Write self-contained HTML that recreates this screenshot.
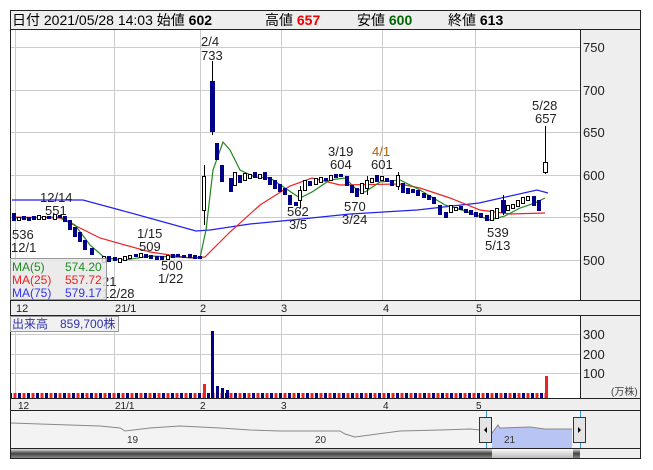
<!DOCTYPE html>
<html><head><meta charset="utf-8"><style>
body{margin:0;background:#fff;width:653px;height:470px;overflow:hidden}
svg{display:block;font-family:"Liberation Sans","Noto Sans CJK JP",sans-serif}
</style></head><body>
<svg width="653" height="470" viewBox="0 0 653 470" font-size="12" xmlns="http://www.w3.org/2000/svg">
<rect x="10.5" y="10.5" width="630" height="448" fill="#fff" stroke="#222"/>
<rect x="11" y="11" width="629" height="18" fill="#eeeeee"/>
<line x1="10" y1="29.5" x2="641" y2="29.5" stroke="#222"/>
<text x="12" y="25" font-size="14">日付 2021/05/28 14:03 始値 <tspan font-weight="bold">602</tspan></text>
<text x="265" y="25" font-size="14">高値 <tspan font-weight="bold" fill="#ee0000">657</tspan></text>
<text x="357" y="25" font-size="14">安値 <tspan font-weight="bold" fill="#006600">600</tspan></text>
<text x="448" y="25" font-size="14">終値 <tspan font-weight="bold">613</tspan></text>
<rect x="580" y="30" width="60" height="270" fill="#eeeeee"/>
<line x1="580.5" y1="30" x2="580.5" y2="300" stroke="#222"/>
<g font-size="13" fill="#222">
<text x="583" y="52">750</text><text x="583" y="95">700</text><text x="583" y="137">650</text>
<text x="583" y="180">600</text><text x="583" y="222">550</text><text x="583" y="265">500</text>
</g>
<g stroke="#cccccc" stroke-width="1">
<line x1="11" y1="47.5" x2="580" y2="47.5"/><line x1="11" y1="90.5" x2="580" y2="90.5"/>
<line x1="11" y1="132.5" x2="580" y2="132.5"/><line x1="11" y1="175.5" x2="580" y2="175.5"/>
<line x1="11" y1="217.5" x2="580" y2="217.5"/><line x1="11" y1="260.5" x2="580" y2="260.5"/>
<line x1="15.5" y1="30" x2="15.5" y2="300"/><line x1="114.5" y1="30" x2="114.5" y2="300"/>
<line x1="200.5" y1="30" x2="200.5" y2="300"/><line x1="281.5" y1="30" x2="281.5" y2="300"/>
<line x1="382.5" y1="30" x2="382.5" y2="300"/><line x1="475.5" y1="30" x2="475.5" y2="300"/>
</g>
<polyline fill="none" stroke="#2222ee" stroke-width="1.2" points="12,200 83,200 120,210 160,221 196,231 210,230 250,224 292,220 350,214 417,210 479,203 537,190 548,193"/>
<polyline fill="none" stroke="#ee2222" stroke-width="1.2" points="12,217 60,218 100,238 150,252 190,258 205,257 230,232 260,205 290,186 312,178 340,185 400,184 420,188 450,198 480,210 510,214 545,213"/>
<polyline fill="none" stroke="#228822" stroke-width="1.2" points="12,218 60,217 75,225 90,245 105,258 125,260 150,256 175,257 200,258 206,230 213,170 223,142 230,150 240,170 255,177 270,178 285,188 300,198 312,192 330,180 345,178 355,188 365,192 380,182 400,180 420,190 445,205 465,211 490,220 505,216 520,208 535,203 545,198"/>
<g stroke="#000" stroke-width="1">
<path d="M204.5,165V225M212.5,61V135M545.5,126V174M300.5,186V208M503.5,195V215M367.5,176V195M398.5,172V190"/>
</g>
<g fill="#000088">
<rect x="12" y="213" width="4" height="8"/><rect x="22" y="216" width="4" height="4"/><rect x="27" y="217" width="4" height="4"/><rect x="32" y="216" width="4" height="4"/><rect x="47" y="216" width="4" height="3"/><rect x="58" y="215" width="4" height="3"/><rect x="63" y="216" width="4" height="6"/><rect x="68" y="220" width="4" height="10"/><rect x="73" y="227" width="4" height="10"/><rect x="78" y="232" width="4" height="10"/><rect x="83" y="240" width="4" height="10"/><rect x="90" y="248" width="4" height="7"/><rect x="107" y="256" width="4" height="6"/><rect x="113" y="257" width="4" height="4"/><rect x="134" y="254" width="4" height="3"/><rect x="144" y="254" width="4" height="4"/><rect x="149" y="255" width="4" height="4"/><rect x="155" y="256" width="4" height="4"/><rect x="160" y="256" width="4" height="4"/><rect x="171" y="254" width="4" height="4"/><rect x="176" y="254" width="4" height="3"/><rect x="182" y="255" width="4" height="3"/><rect x="188" y="254" width="4" height="4"/><rect x="193" y="255" width="4" height="4"/><rect x="198" y="256" width="4" height="3"/>
<rect x="210" y="81" width="5" height="51"/><rect x="215" y="143" width="4" height="17"/><rect x="220" y="165" width="4" height="17"/><rect x="229" y="178" width="4" height="14"/><rect x="238" y="175" width="4" height="8"/><rect x="253" y="172" width="4" height="6"/><rect x="263" y="172" width="4" height="8"/><rect x="268" y="177" width="4" height="8"/><rect x="273" y="180" width="4" height="9"/><rect x="278" y="184" width="4" height="8"/><rect x="283" y="188" width="4" height="7"/><rect x="288" y="195" width="4" height="10"/><rect x="294" y="202" width="4" height="4"/><rect x="308" y="181" width="4" height="5"/><rect x="324" y="178" width="4" height="3"/><rect x="334" y="174" width="4" height="4"/><rect x="339" y="174" width="4" height="3"/><rect x="345" y="176" width="4" height="10"/><rect x="350" y="185" width="4" height="8"/><rect x="355" y="188" width="4" height="9"/><rect x="375" y="175" width="4" height="7"/><rect x="385" y="178" width="4" height="4"/><rect x="390" y="180" width="4" height="6"/><rect x="401" y="183" width="4" height="10"/><rect x="406" y="188" width="4" height="6"/><rect x="411" y="189" width="4" height="4"/><rect x="416" y="190" width="4" height="6"/><rect x="422" y="193" width="4" height="5"/><rect x="427" y="195" width="4" height="5"/><rect x="432" y="197" width="4" height="7"/><rect x="438" y="205" width="4" height="10"/><rect x="444" y="212" width="4" height="6"/><rect x="459" y="206" width="4" height="4"/><rect x="464" y="209" width="4" height="4"/><rect x="469" y="210" width="4" height="5"/><rect x="474" y="212" width="4" height="5"/><rect x="479" y="213" width="4" height="5"/><rect x="485" y="215" width="4" height="6"/><rect x="501" y="200" width="5" height="13"/><rect x="532" y="196" width="4" height="10"/><rect x="537" y="200" width="4" height="11"/>
</g>
<g fill="#fff" stroke="#000" stroke-width="1">
<rect x="17.5" y="217.5" width="3" height="3"/><rect x="37.5" y="215.5" width="3" height="4"/><rect x="42.5" y="216.5" width="3" height="3"/><rect x="53.5" y="214.5" width="3" height="5"/><rect x="102.5" y="256.5" width="3" height="6"/><rect x="118.5" y="258.5" width="3" height="4"/><rect x="123.5" y="256.5" width="3" height="4"/><rect x="128.5" y="255.5" width="3" height="3"/><rect x="139.5" y="253.5" width="3" height="4"/><rect x="166.5" y="255.5" width="3" height="4"/>
<rect x="202.5" y="176.5" width="3" height="34"/><rect x="233.5" y="172.5" width="3" height="13"/><rect x="243.5" y="173.5" width="3" height="7"/><rect x="248.5" y="174.5" width="3" height="4"/><rect x="258.5" y="174.5" width="3" height="4"/><rect x="298.5" y="190.5" width="3" height="10"/><rect x="303.5" y="180.5" width="3" height="10"/><rect x="314.5" y="178.5" width="3" height="6"/><rect x="319.5" y="177.5" width="3" height="5"/><rect x="329.5" y="175.5" width="3" height="5"/><rect x="360.5" y="183.5" width="3" height="10"/><rect x="365.5" y="180.5" width="3" height="8"/><rect x="370.5" y="178.5" width="3" height="4"/><rect x="380.5" y="176.5" width="3" height="4"/><rect x="396.5" y="175.5" width="3" height="11"/><rect x="449.5" y="205.5" width="3" height="7"/><rect x="454.5" y="207.5" width="3" height="3"/><rect x="490.5" y="210.5" width="3" height="10"/><rect x="495.5" y="208.5" width="3" height="10"/><rect x="506.5" y="205.5" width="3" height="5"/><rect x="511.5" y="204.5" width="3" height="4"/><rect x="516.5" y="200.5" width="3" height="6"/><rect x="521.5" y="197.5" width="3" height="6"/><rect x="526.5" y="196.5" width="3" height="4"/><rect x="543.5" y="162.5" width="4" height="10"/>
</g>
<g fill="#222" font-size="13">
<text x="201" y="46">2/4</text><text x="201" y="60">733</text>
<text x="532" y="110">5/28</text><text x="535" y="123">657</text>
<text x="328" y="156">3/19</text><text x="330" y="169">604</text>
<text x="372" y="156" fill="#b06000">4/1</text><text x="371" y="169">601</text>
<text x="40" y="202">12/14</text><text x="45" y="215">551</text>
<text x="12" y="239">536</text><text x="11" y="252">12/1</text>
<text x="137" y="238">1/15</text><text x="139" y="251">509</text>
<text x="161" y="270">500</text><text x="158" y="283">1/22</text>
<text x="287" y="216">562</text><text x="289" y="229">3/5</text>
<text x="344" y="211">570</text><text x="342" y="224">3/24</text>
<text x="487" y="237">539</text><text x="485" y="250">5/13</text>
<text x="102" y="286">21</text><text x="102" y="298">12/28</text>
</g>
<rect x="10.5" y="258.5" width="96" height="41" fill="#e8e8e8" fill-opacity="0.85" stroke="#999"/>
<g font-size="12">
<text x="12" y="271" fill="#228822">MA(5)</text><text x="65" y="271" fill="#228822">574.20</text>
<text x="12" y="284" fill="#ee2222">MA(25)</text><text x="65" y="284" fill="#ee2222">557.72</text>
<text x="12" y="297" fill="#3333ee">MA(75)</text><text x="65" y="297" fill="#3333ee">579.17</text>
</g>
<rect x="11" y="300" width="629" height="15" fill="#eeeeee"/>
<line x1="10" y1="300.5" x2="641" y2="300.5" stroke="#222"/>
<line x1="10" y1="315.5" x2="641" y2="315.5" stroke="#222"/>
<g font-size="11" fill="#222"><text x="16" y="312">12</text><text x="115" y="312">21/1</text><text x="200" y="312">2</text><text x="281" y="312">3</text><text x="383" y="312">4</text><text x="476" y="312">5</text></g>
<rect x="580" y="316" width="60" height="83" fill="#eeeeee"/>
<line x1="580.5" y1="316" x2="580.5" y2="399" stroke="#222"/>
<g stroke="#cccccc"><line x1="11" y1="334.5" x2="580" y2="334.5"/><line x1="11" y1="354.5" x2="580" y2="354.5"/><line x1="11" y1="373.5" x2="580" y2="373.5"/>
<line x1="15.5" y1="316" x2="15.5" y2="398"/><line x1="114.5" y1="316" x2="114.5" y2="398"/><line x1="200.5" y1="316" x2="200.5" y2="398"/><line x1="281.5" y1="316" x2="281.5" y2="398"/><line x1="382.5" y1="316" x2="382.5" y2="398"/><line x1="475.5" y1="316" x2="475.5" y2="398"/></g>
<g font-size="13" fill="#222"><text x="583" y="339">300</text><text x="583" y="359">200</text><text x="583" y="378">100</text></g>
<text x="611" y="395" font-size="10" fill="#444">(万株)</text>
<defs><pattern id="vp" width="9" height="5" patternUnits="userSpaceOnUse"><rect width="3" height="5" fill="#000088"/><rect x="4.5" width="3" height="5" fill="#ee2222"/></pattern></defs>
<rect x="11" y="393" width="534" height="5" fill="url(#vp)"/>
<rect x="203" y="384" width="3" height="14" fill="#ee2222"/><rect x="211" y="331" width="3" height="67" fill="#000088"/><rect x="216" y="386" width="3" height="12" fill="#000088"/><rect x="221" y="388" width="3" height="10" fill="#000088"/><rect x="226" y="390" width="3" height="8" fill="#000088"/><rect x="545" y="376" width="3" height="22" fill="#ee2222"/>
<rect x="10.5" y="316.5" width="108" height="15" fill="#eeeeee" fill-opacity="0.85" stroke="#999"/>
<text x="12" y="328" fill="#3333aa">出来高　859,700株</text>
<rect x="11" y="399" width="629" height="11" fill="#eeeeee"/>
<line x1="10" y1="398.5" x2="641" y2="398.5" stroke="#222"/><line x1="10" y1="410.5" x2="641" y2="410.5" stroke="#222"/>
<g font-size="10" fill="#222"><text x="18" y="409">12</text><text x="115" y="409">21/1</text><text x="200" y="409">2</text><text x="281" y="409">3</text><text x="383" y="409">4</text><text x="476" y="409">5</text></g>
<rect x="11" y="411" width="569" height="37" fill="#f3f3f3"/>
<rect x="580" y="411" width="60" height="37" fill="#eeeeee"/>
<path d="M492,433 L498,425 L500,428 L530,427 L545,429 L572,429 L572,448 L492,448Z" fill="#b8c4f4"/>
<polyline fill="none" stroke="#888" points="11,423 40,424 70,425 100,426 120,428 125,431 150,428 180,426 200,427 220,428 250,430 280,431 310,431 340,431 345,434 355,437 370,435 385,433 400,431 440,430 470,429 480,430 492,433 498,425 500,428 530,427 545,429 572,429"/>
<g font-size="10" fill="#333"><text x="127" y="443">19</text><text x="315" y="443">20</text><text x="504" y="443">21</text></g>
<line x1="486.5" y1="411" x2="486.5" y2="448" stroke="#3399dd"/><line x1="580.5" y1="411" x2="580.5" y2="448" stroke="#3399dd"/>
<rect x="479.5" y="417.5" width="12" height="25" fill="#e4e4e4" stroke="#333"/><path d="M484,430 l3,-3 v6z" fill="#000"/>
<rect x="573.5" y="417.5" width="12" height="25" fill="#e4e4e4" stroke="#333"/><path d="M581,430 l-3,-3 v6z" fill="#000"/>
<defs><linearGradient id="sb" x1="0" y1="0" x2="0" y2="1"><stop offset="0" stop-color="#ddd"/><stop offset="0.5" stop-color="#444"/><stop offset="1" stop-color="#888"/></linearGradient>
<linearGradient id="th" x1="0" y1="0" x2="0" y2="1"><stop offset="0" stop-color="#fafafa"/><stop offset="1" stop-color="#bbb"/></linearGradient></defs>
<line x1="10" y1="448.5" x2="641" y2="448.5" stroke="#222"/>
<rect x="11" y="449" width="569" height="9" fill="url(#sb)"/>
<rect x="492" y="449" width="81" height="9" fill="url(#th)"/>
<rect x="580" y="449" width="60" height="9" fill="#eeeeee"/>
</svg>
</body></html>
